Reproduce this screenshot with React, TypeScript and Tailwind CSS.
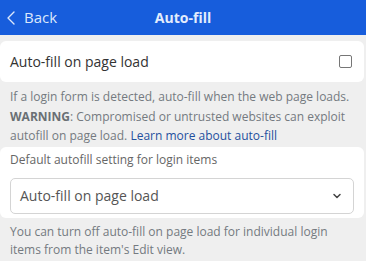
import { ChevronLeft, ChevronDown } from "lucide-react"

export default function App() {
  return (
    <div className="w-[366px] h-[261px] overflow-hidden bg-[#efefef] font-['Open_Sans',sans-serif]">
      {/* Header */}
      <div className="h-[35px] bg-[#175ddc] flex items-center relative">
        <button className="flex items-center -ml-[1px] text-[#dbe7fb] text-[15px]">
          <ChevronLeft className="w-[24px] h-[24px]" strokeWidth={1.4} />
          <span className="ml-[1px]">Back</span>
        </button>
        <div className="absolute left-0 right-0 text-center text-[14px] font-bold text-[#e3ecfc] pointer-events-none">
          Auto-fill
        </div>
      </div>

      <div className="pt-[6px] pr-[2px]">
        {/* Auto-fill on page load */}
        <div className="bg-white rounded-[6px] h-[41px] flex items-center justify-between pl-[10px] pr-[12px]">
          <span className="text-[14px] text-[#333]">Auto-fill on page load</span>
          <span className="w-[13px] h-[13px] border border-[#767676] rounded-[2px] bg-white" />
        </div>

        <p className="px-[10px] pt-[5px] text-[12px] leading-[19.5px] text-[#747a80]">
          If a login form is detected, auto-fill when the web page loads.{" "}
          <b className="font-bold text-[#6a6f74]">WARNING</b>: Compromised or untrusted websites can exploit
          autofill on page load. <span className="text-[#1f4f9e]">Learn more about auto-fill</span>
        </p>

        {/* Default setting */}
        <div className="mt-[1px] bg-white rounded-[6px] px-[10px] pt-[3px] pb-[4px]">
          <div className="text-[12px] text-[#666] leading-[20px]">Default autofill setting for login items</div>
          <div className="mt-[8px] h-[36px] border border-[#d4d4d4] rounded-[5px] flex items-center justify-between pl-[9px] pr-[10px]">
            <span className="text-[14px] text-[#555]">Auto-fill on page load</span>
            <ChevronDown className="w-[12px] h-[12px] text-[#444]" strokeWidth={3} />
          </div>
        </div>

        <p className="px-[10px] pt-[5px] text-[12px] leading-[18.5px] text-[#747a80]">
          You can turn off auto-fill on page load for individual login items from the item's Edit view.
        </p>
      </div>
    </div>
  )
}
